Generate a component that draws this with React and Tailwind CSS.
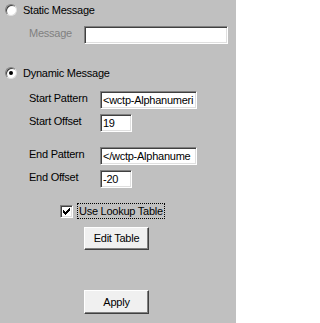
import React from 'react';

const font = { fontFamily: '"Liberation Sans", Arial, sans-serif' };

const Radio = ({ checked }) => (
  <div className="relative w-[12px] h-[12px] rounded-full bg-white border border-t-[#808080] border-l-[#808080] border-r-[#dfdfdf] border-b-[#dfdfdf] shadow-[inset_1px_1px_0_#404040] shrink-0">
    {checked && <div className="absolute left-[3px] top-[3px] w-[4px] h-[4px] rounded-full bg-black" />}
  </div>
);

const Field = ({ width, value }) => (
  <div
    className={`${width} h-[18px] bg-white border border-t-[#808080] border-l-[#808080] border-r-white border-b-white shadow-[inset_1px_1px_0_#404040,inset_-1px_-1px_0_#dfdfdf] overflow-hidden whitespace-nowrap flex items-center pl-[2px] text-black`}
  >
    {value}
  </div>
);

const Row = ({ label, labelWidth, children, className = '', disabled }) => (
  <div className={`flex items-start ml-[29px] ${className}`}>
    <div className={`${labelWidth} mt-[1px] leading-[13px] ${disabled ? 'text-[#808080]' : 'text-black'}`}>{label}</div>
    {children}
  </div>
);

const Button = ({ children, className = '' }) => (
  <div
    className={`ml-[84px] w-[65px] flex items-center justify-center bg-[#f0f0f0] border border-t-white border-l-white border-r-[#404040] border-b-[#404040] shadow-[inset_-1px_-1px_0_#808080] text-black ${className}`}
  >
    {children}
  </div>
);

export default function App() {
  return (
    <div className="w-[236px] h-[323px] bg-[#c0c0c0] pt-[4px] text-[11px] tracking-[-0.25px] overflow-hidden" style={font}>
      <div className="flex items-center h-[12px] pl-[5px] gap-[6px]">
        <Radio />
        <span className="leading-[13px]">Static Message</span>
      </div>

      <Row label="Message" labelWidth="w-[55px]" className="mt-[10px]" disabled>
        <Field width="w-[144px]" value="" />
      </Row>

      <div className="flex items-center h-[12px] pl-[5px] gap-[6px] mt-[23px]">
        <Radio checked />
        <span className="leading-[13px]">Dynamic Message</span>
      </div>

      <Row label="Start Pattern" labelWidth="w-[71px]" className="mt-[12px]">
        <Field width="w-[97px]" value="<wctp-Alphanumeri" />
      </Row>
      <Row label="Start Offset" labelWidth="w-[71px]" className="mt-[5px]">
        <Field width="w-[32px]" value="19" />
      </Row>

      <Row label="End Pattern" labelWidth="w-[71px]" className="mt-[15px]">
        <Field width="w-[97px]" value="</wctp-Alphanume" />
      </Row>
      <Row label="End Offset" labelWidth="w-[71px]" className="mt-[5px]">
        <Field width="w-[32px]" value="-20" />
      </Row>

      <div className="flex items-center h-[16px] mt-[15px] ml-[60px]">
        <div className="w-[13px] h-[13px] bg-white border border-t-[#808080] border-l-[#808080] border-r-white border-b-white shadow-[inset_1px_1px_0_#404040,inset_-1px_-1px_0_#dfdfdf] flex items-center justify-center shrink-0">
          <svg width="7" height="7" viewBox="0 0 7 7">
            <path d="M0 2h1v1h1v1h1v-1h1v-1h1v-1h1v-1h1v3h-1v1h-1v1h-1v1h-1v1h-1v-1h-1v-1h-1v-1h-1z" fill="#000" />
          </svg>
        </div>
        <div className="ml-[4px] h-[16px] px-[1px] border border-dotted border-black flex items-center leading-[13px]">
          Use Lookup Table
        </div>
      </div>

      <Button className="mt-[8px] h-[23px]">Edit Table</Button>
      <Button className="mt-[40px] h-[24px]">Apply</Button>
    </div>
  );
}
